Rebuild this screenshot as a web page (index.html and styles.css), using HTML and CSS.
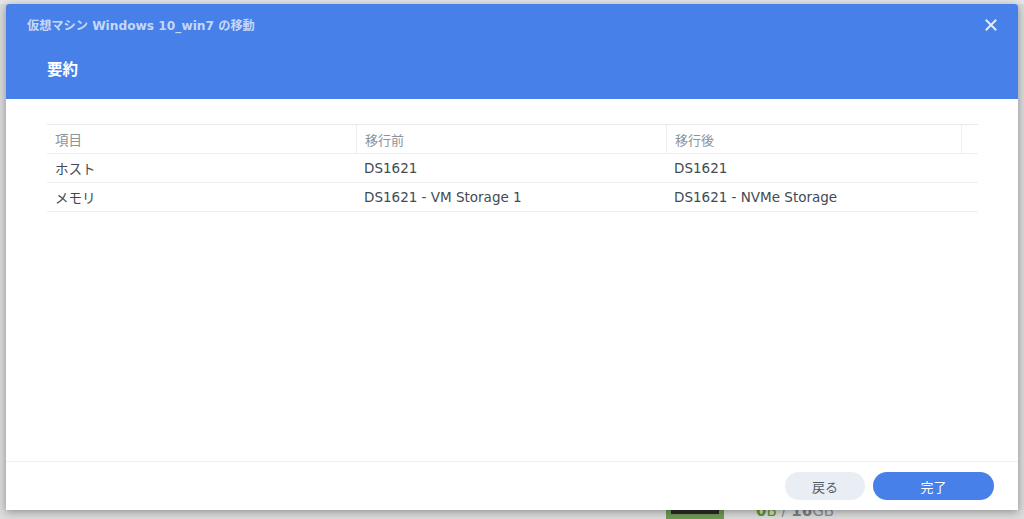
FILE: index.html
```html
<!DOCTYPE html>
<html lang="ja">
<head>
<meta charset="utf-8">
<link rel="stylesheet" href="styles.css">
</head>
<body>
<div class="backdrop">
  <div class="bg-strip"></div>
  <div class="bg-bottom"><span class="chip"></span><span class="mem"><b class="g">0</b><span class="g">B</span> / <b>16</b>GB</span></div>
</div>
<div class="dialog">
  <div class="header">
    <div class="title-row">
      <div class="title">仮想マシン Windows 10_win7 の移動</div>
      <div class="close">
        <svg width="12" height="12" viewBox="0 0 12 12"><path d="M1.5 1.5 L10.5 10.5 M10.5 1.5 L1.5 10.5" stroke="#fff" stroke-width="2" stroke-linecap="square" fill="none"/></svg>
      </div>
    </div>
    <div class="step">要約</div>
  </div>
  <div class="body">
    <div class="table">
      <div class="row head">
        <div class="cell">項目</div>
        <div class="cell">移行前</div>
        <div class="cell">移行後</div>
        <div class="cell last"></div>
      </div>
      <div class="row">
        <div class="cell">ホスト</div>
        <div class="cell">DS1621</div>
        <div class="cell">DS1621</div>
        <div class="cell last"></div>
      </div>
      <div class="row">
        <div class="cell">メモリ</div>
        <div class="cell">DS1621 - VM Storage 1</div>
        <div class="cell">DS1621 - NVMe Storage</div>
        <div class="cell last"></div>
      </div>
    </div>
  </div>
  <div class="footer">
    <button class="btn back">戻る</button>
    <button class="btn done">完了</button>
  </div>
</div>
</body>
</html>
```

FILE: styles.css
```css
html, body {
  margin: 0;
  padding: 0;
  width: 1024px;
  height: 519px;
  overflow: hidden;
}
body {
  background: #d9dadb;
  font-family: "DejaVu Sans", "Noto Sans CJK JP", sans-serif;
  position: relative;
}
.backdrop {
  position: absolute;
  inset: 0;
}
.bg-strip {
  position: absolute;
  left: 0; top: 0; width: 1024px; height: 4px;
  background: #e4e5e6;
}
.bg-bottom {
  position: absolute;
  left: 0; top: 510px; width: 1024px; height: 9px;
  background: #dcdcdc;
}
.chip {
  position: absolute;
  left: 666px; top: 0; width: 58px; height: 9px;
  background: #6e9a55;
}
.chip::after {
  content: "";
  position: absolute;
  left: 5px; top: 0; width: 48px; height: 4px;
  background: #2a2a2a;
}
.mem {
  position: absolute;
  left: 756px; top: -6px;
  font-size: 15px;
  line-height: 15px;
  color: #8b8e92;
  font-family: "DejaVu Sans", sans-serif;
}
.mem b { font-weight: bold; color: #7d8084; }
.mem .g { color: #5a9a2c; }
.dialog {
  position: absolute;
  left: 6px; top: 4px;
  width: 1012px; height: 506px;
  background: #fff;
  border-radius: 3px 3px 0 0;
  box-shadow: 0 2px 8px rgba(0,0,0,0.35);
  display: flex;
  flex-direction: column;
}
.header {
  background: #4680e8;
  height: 95px;
  box-sizing: border-box;
  padding: 11px 20px 0 21px;
  border-radius: 3px 3px 0 0;
  flex: none;
}
.title-row {
  display: flex;
  justify-content: space-between;
  align-items: center;
  height: 20px;
}
.title {
  font-family: "DejaVu Sans", "Noto Sans CJK JP", sans-serif;
  font-weight: bold;
  font-size: 12.2px;
  color: rgba(255,255,255,0.7);
}
.close {
  width: 12px; height: 12px;
  opacity: 0.85;
  margin-right: 1px;
  display: flex;
}
.step {
  margin-top: 22px;
  margin-left: 20px;
  font-family: "Noto Sans CJK JP", sans-serif;
  font-weight: bold;
  font-size: 15.5px;
  color: #fff;
}
.body {
  flex: 1;
  padding: 25px 40px 0 41px;
}
.table {
  border-top: 1px solid #e6e9ed;
}
.row {
  display: grid;
  grid-template-columns: 309px 310px 295px 17px;
  height: 28px;
  border-bottom: 1px solid #eceef1;
}
.cell {
  padding-left: 8px;
  display: flex;
  align-items: center;
  font-size: 13.5px;
  color: #414b55;
  white-space: nowrap;
}
.head .cell {
  color: #8d939a;
  font-family: "Noto Sans CJK JP", sans-serif;
  font-size: 13px;
}
.head .cell + .cell {
  border-left: 1px solid #eceef1;
}
.row .cell:first-child {
  font-family: "Noto Sans CJK JP", sans-serif;
  font-size: 13.5px;
}
.footer {
  flex: none;
  height: 49px;
  border-top: 1px solid #eef0f4;
  display: flex;
  justify-content: flex-end;
  align-items: center;
  gap: 8px;
  padding-right: 24px;
  box-sizing: border-box;
}
.btn {
  height: 28px;
  border: none;
  border-radius: 14px;
  font-family: "Noto Sans CJK JP", sans-serif;
  font-size: 13px;
  padding: 0;
}
.back {
  width: 80px;
  background: #e9edf4;
  color: #545b63;
}
.done {
  width: 121px;
  background: #4680e8;
  color: #fff;
}
```
